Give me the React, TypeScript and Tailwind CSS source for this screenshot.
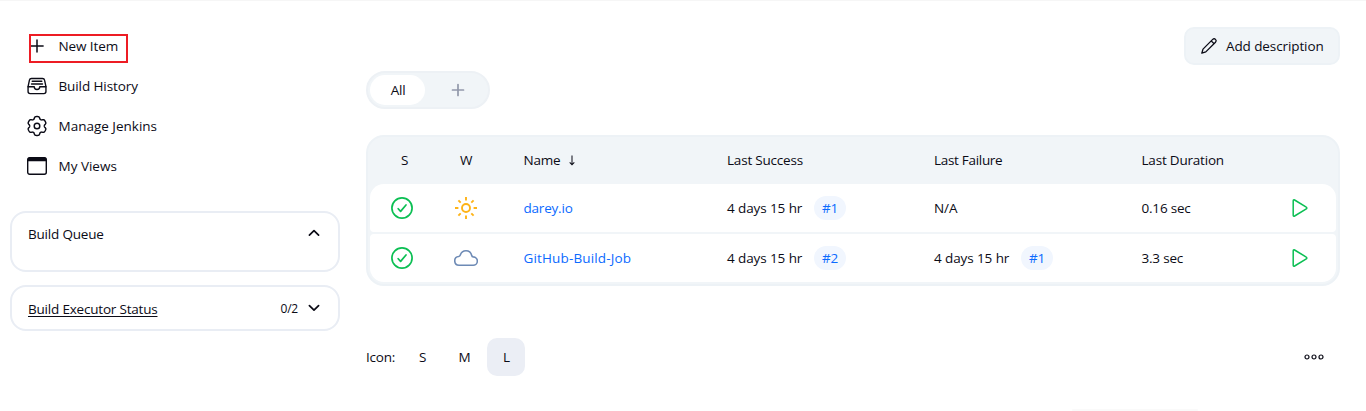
import type { ReactNode } from "react";
import { IoFileTrayFullOutline } from "react-icons/io5";

const PlusIcon = ({ className, width = 1.5 }: { className: string; width?: number }) => (
  <svg viewBox="0 0 20 20" className={className} fill="none" stroke="currentColor" strokeWidth={width} strokeLinecap="round">
    <path d="M10 3.9v12.2M3.9 10h12.2" />
  </svg>
);

const gearPath =
  Array.from({ length: 120 }, (_, i) => {
    const a = (i * Math.PI) / 60;
    const r = 8.3 + 1.15 * Math.tanh(1.9 * Math.cos(6 * (a - Math.PI / 2)) + 0.7);
    return `${i ? "L" : "M"}${(10 + r * Math.cos(a)).toFixed(2)} ${(10 + r * Math.sin(a)).toFixed(2)}`;
  }).join("") + "Z";

const GearIcon = () => (
  <svg viewBox="0 0 20 20" className="size-5 overflow-visible" fill="none" stroke="currentColor" strokeWidth="1.45" strokeLinejoin="round">
    <path d={gearPath} />
    <circle cx="10" cy="10" r="2.8" />
  </svg>
);

const WindowIcon = () => (
  <svg viewBox="0 0 20 20" className="size-5" fill="none" stroke="currentColor" strokeWidth="1.4">
    <rect x="0.7" y="1.7" width="18.6" height="16.6" rx="2" />
    <path d="M0.7 3.5Q0.700 1.300 3 1.300h14q2.300 0 2.300 2.200V5.200H0.700z" fill="currentColor" stroke="none" />
  </svg>
);

const Chevron = ({ up }: { up?: boolean }) => (
  <svg viewBox="0 0 12 8" className="h-2 w-3" fill="none" stroke="currentColor" strokeWidth="1.7" strokeLinecap="round" strokeLinejoin="round">
    <path d={up ? "M1.4 6.2 6 1.6l4.6 4.6" : "M1.4 1.6 6 6.2l4.6-4.6"} />
  </svg>
);

const CheckIcon = () => (
  <svg viewBox="0 0 24 24" className="ml-5 size-6 text-[#0bbf53]" fill="none" stroke="currentColor" strokeWidth="1.7" strokeLinecap="round" strokeLinejoin="round">
    <circle cx="12" cy="12" r="10.1" />
    <path d="m8.2 12.7 2.4 2.7 5.4-6.4" />
  </svg>
);

const SunIcon = () => (
  <svg viewBox="0 0 24 24" className="size-6 text-[#feb317]" fill="none" stroke="currentColor" strokeWidth="1.9">
    <circle cx="12" cy="12" r="4" />
    <path d="M12 1v3.4M12 19.6V23M1 12h3.4M19.6 12H23M4.4 4.4l2.3 2.3M17.3 17.3l2.3 2.3M4.4 19.6l2.3-2.3M17.3 6.7l2.3-2.3" />
  </svg>
);

const CloudIcon = () => (
  <svg viewBox="0 0 24 24" className="size-6 text-[#6d8ab5]" fill="none" stroke="currentColor" strokeWidth="1.6" strokeLinejoin="round">
    <path d="M5 19.3h14a4.2 4.2 0 0 0 .3-8.4c-.9-.1-1.4-.5-1.6-1.4C17 6.6 14.9 4.8 12 4.8S7.1 6.5 6.3 9c-.3.9-.8 1.3-1.7 1.5A4.42 4.42 0 0 0 5 19.3z" />
  </svg>
);

const PlayIcon = () => (
  <svg viewBox="0 0 20 20" className="ml-[26px] size-5 text-[#0bbf53]" fill="none" stroke="currentColor" strokeWidth="1.5" strokeLinejoin="round">
    <path d="M3.2 2.8v14.4c0 .8.7 1.2 1.4.8l11.7-7.1c.7-.4.7-1.4 0-1.8L4.6 2c-.7-.4-1.4 0-1.4.8z" />
  </svg>
);

const PencilIcon = () => (
  <svg viewBox="0 0 18 18" className="size-[18px]" fill="none" stroke="currentColor" strokeWidth="1.3" strokeLinejoin="round">
    <path d="M1.8 16.2 3 12.1 12.7 2.4c.8-.8 2-.8 2.8 0s.8 2 0 2.8L5.8 14.9z" />
    <path d="m11.2 3.9 2.9 2.9" />
  </svg>
);

const Task = ({ icon, children }: { icon: ReactNode; children: ReactNode }) => (
  <div className="flex h-10 items-center">
    <span className="flex w-5 justify-center">{icon}</span>
    <span className="ml-[11.5px] tracking-[-0.1px]">{children}</span>
  </div>
);

const Badge = ({ children }: { children: ReactNode }) => (
  <span className="ml-3 flex h-6 w-8 items-center justify-center rounded-full bg-[#f1f6fe] text-[#0b6aff]">{children}</span>
);

const Run = ({ time, build }: { time: string; build?: string }) => (
  <div className="flex items-center tracking-[-0.1px]">
    <span className={build ? "w-[75px] whitespace-nowrap" : ""}>{time}</span>
    {build && <Badge>{build}</Badge>}
  </div>
);

const grid = "grid grid-cols-[64px_89.5px_203.5px_207px_207.5px_122px_1fr] items-center";

const Job = ({ className, weather, name, success, failure, duration }: {
  className: string;
  weather: ReactNode;
  name: ReactNode;
  success: ReactNode;
  failure: ReactNode;
  duration: string;
}) => (
  <div className={`${grid} h-12 bg-white ${className}`}>
    <CheckIcon />
    <span className="ml-5 flex">{weather}</span>
    <span className="text-[#0b6aff]">{name}</span>
    {success}
    {failure}
    <span>{duration}</span>
    <PlayIcon />
  </div>
);

export default function App() {
  return (
    <div className="relative flex h-[411px] w-[1366px] overflow-hidden border-t border-[#f6f6f6] bg-white font-['Open_Sans','Noto_Sans',sans-serif] text-[13.5px] leading-5 tracking-[-0.2px] text-[#0b0b16]">
      <aside className="w-[340px] pt-[25px] pl-2.5">
        <nav className="relative pl-[17px]">
          <Task icon={<PlusIcon className="size-5" />}>New Item</Task>
          <Task icon={<IoFileTrayFullOutline className="size-[22px] shrink-0" />}>Build History</Task>
          <Task icon={<GearIcon />}><span className="tracking-[0px]">Manage Jenkins</span></Task>
          <Task icon={<WindowIcon />}><span className="tracking-[0px]">My Views</span></Task>
          <div className="absolute top-2 left-[19px] h-[29px] w-[99px] border-2 border-[#ed1c24]" />
        </nav>
        <section className="mt-[25px] flex h-[61px] items-start justify-between rounded-2xl border-2 border-[#e9edf4] pt-[11px] pr-[18px] pl-4">
          <span>Build Queue</span>
          <span className="mt-[5px]"><Chevron up /></span>
        </section>
        <section className="mt-[13px] flex h-[46px] items-center rounded-2xl border-2 border-[#e9edf4] pr-[18px] pl-4">
          <span className="mt-0.5 underline underline-offset-2">Build Executor Status</span>
          <span className="mt-px mr-2.5 ml-auto text-xs">0/2</span>
          <Chevron />
        </section>
      </aside>
      <main className="ml-[26px] w-[974px] pt-[26px]">
        <div className="flex h-[38px] justify-end">
          <button className="flex w-[156px] items-center rounded-[10px] border-2 border-[#edf2f6] bg-[#f1f5f8] pl-3.5">
            <PencilIcon />
            <span className="ml-2 tracking-[-0.1px]">Add description</span>
          </button>
        </div>
        <div className="mt-1.5 flex h-[38px] w-[124px] items-center rounded-full border-2 border-[#edf1f5] bg-[#f1f5f8] pl-0.5">
          <span className="flex h-[30px] w-14 items-center justify-center rounded-full bg-white pl-px">All</span>
          <span className="flex w-16 justify-center pl-0.5 text-[#9298aa]"><PlusIcon className="size-[18px]" width={1.9} /></span>
        </div>
        <div className="mt-[26px] h-[151px] rounded-[18px] border-2 border-[#edf2f6] bg-[#f1f5f8] px-0.5">
          <div className={`${grid} h-[47px] pb-0.5`}>
            <span className="ml-[31px]">S</span>
            <span className="ml-[26px]">W</span>
            <span className="flex gap-2">Name
              <svg viewBox="0 0 8 12" className="mt-[5px] h-[11px] w-2" fill="none" stroke="currentColor" strokeWidth="1.1"><path d="M4 .5v10M1.5 8 4 10.7 6.5 8" /></svg>
            </span>
            <span>Last Success</span>
            <span className="tracking-[-0.3px]">Last Failure</span>
            <span>Last Duration</span>
          </div>
          <Job
            className="rounded-t-[14px] rounded-b-[4px]"
            weather={<SunIcon />}
            name="darey.io"
            success={<Run time="4 days 15 hr" build="#1" />}
            failure={<Run time="N/A" />}
            duration="0.16 sec"
          />
          <Job
            className="mt-0.5 rounded-t-[4px] rounded-b-[14px]"
            weather={<CloudIcon />}
            name={<span className="tracking-[0.15px]">GitHub-Build-Job</span>}
            success={<Run time="4 days 15 hr" build="#2" />}
            failure={<Run time="4 days 15 hr" build="#1" />}
            duration="3.3 sec"
          />
        </div>
        <div className="mt-[52px] flex h-[38px] items-center">
          <span className="w-[37px]">Icon:</span>
          <span className="w-[38px] pl-px text-center">S</span>
          <span className="ml-1 w-[38px] pl-px text-center">M</span>
          <span className="ml-1 flex h-[38px] w-[38px] items-center justify-center rounded-[10px] bg-[#ebeef5] pl-px">L</span>
          <svg viewBox="0 0 20 6" className="mr-4 mb-px ml-auto h-1.5 w-5" fill="none" stroke="currentColor" strokeWidth="1.2">
            <circle cx="3" cy="3" r="2" />
            <circle cx="10" cy="3" r="2" />
            <circle cx="17" cy="3" r="2" />
          </svg>
        </div>
      </main>
      <div className="absolute bottom-0 left-[1072px] h-0.5 w-[126px] rounded-full bg-[#fafafa]" />
    </div>
  );
}
